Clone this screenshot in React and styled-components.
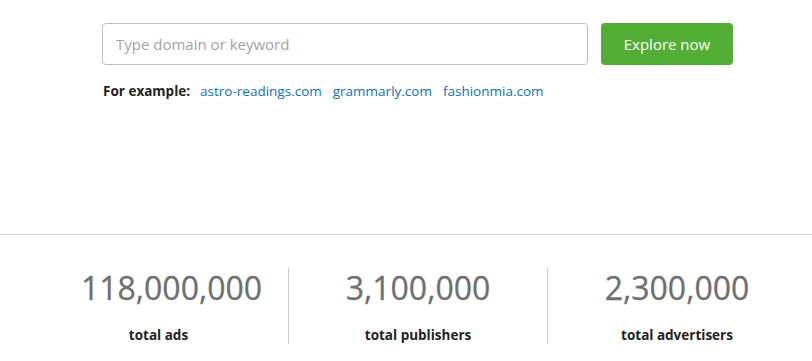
import styled, { createGlobalStyle } from "styled-components";

const GlobalStyle = createGlobalStyle`
  body {
    margin: 0;
    background: #ffffff;
    font-family: "Open Sans", "Noto Sans", sans-serif;
  }
`;

const EXAMPLES = ["astro-readings.com", "grammarly.com", "fashionmia.com"];

const STATS = [
  { value: "118,000,000", label: "total ads", shift: 26 },
  { value: "3,100,000", label: "total publishers", shift: 0 },
  { value: "2,300,000", label: "total advertisers", shift: 0 },
];

function App() {
  return (
    <Page>
      <GlobalStyle />
      <Search>
        <SearchRow>
          <Input type="text" placeholder="Type domain or keyword" />
          <ExploreButton>Explore now</ExploreButton>
        </SearchRow>
        <Examples>
          <ExampleTitle>For example:</ExampleTitle>
          {EXAMPLES.map((item) => (
            <ExampleLink key={item} href="#">{item}</ExampleLink>
          ))}
        </Examples>
      </Search>
      <Stats>
        {STATS.map((stat) => (
          <Stat key={stat.label}>
            <Value $shift={stat.shift}>{stat.value}</Value>
            <Label>{stat.label}</Label>
          </Stat>
        ))}
      </Stats>
    </Page>
  );
}

const Page = styled.div`
  width: 812px;
  height: 361px;
  overflow: hidden;
`;

const Search = styled.div`
  padding: 23px 0 0 102px;
  height: 235px;
  box-sizing: border-box;
  border-bottom: 1px solid #d6d6d6;
`;

const SearchRow = styled.div`
  display: flex;
  gap: 13px;
`;

const Input = styled.input`
  width: 486px;
  height: 42px;
  box-sizing: border-box;
  border: 1px solid #bdbdbd;
  border-radius: 4px;
  padding: 0 13px;
  font-family: inherit;
  font-size: 15px;
  color: #333333;
  outline: none;

  &::placeholder {
    color: #a3a3a3;
  }
`;

const ExploreButton = styled.button`
  width: 132px;
  height: 42px;
  border: none;
  border-radius: 4px;
  background: #52ae34;
  color: #ffffff;
  font-family: inherit;
  font-size: 15px;
  cursor: pointer;
`;

const Examples = styled.div`
  display: flex;
  align-items: baseline;
  margin-top: 17px;
  padding-left: 1px;
  font-size: 13.5px;
`;

const ExampleTitle = styled.span`
  font-weight: 700;
  color: #222222;
  margin-right: 10px;
`;

const ExampleLink = styled.a`
  color: #0f6fbf;
  text-decoration: none;
  margin-right: 11px;
`;

const Stats = styled.div`
  display: grid;
  grid-template-columns: 259px 259px 259px;
  padding: 33px 0 0 29px;
`;

const Stat = styled.div`
  display: flex;
  flex-direction: column;
  align-items: center;
  height: 76px;
  justify-content: space-between;

  & + & {
    border-left: 1px solid #cccccc;
  }
`;

const Value = styled.div`
  font-size: 32px;
  line-height: 40px;
  color: #6f6f6f;
  margin-left: ${(p) => p.$shift}px;
  -webkit-text-stroke: 0.3px #6f6f6f;
`;

const Label = styled.div`
  font-size: 13.5px;
  font-weight: 700;
  color: #222222;
  line-height: 18px;
`;

export default App;
